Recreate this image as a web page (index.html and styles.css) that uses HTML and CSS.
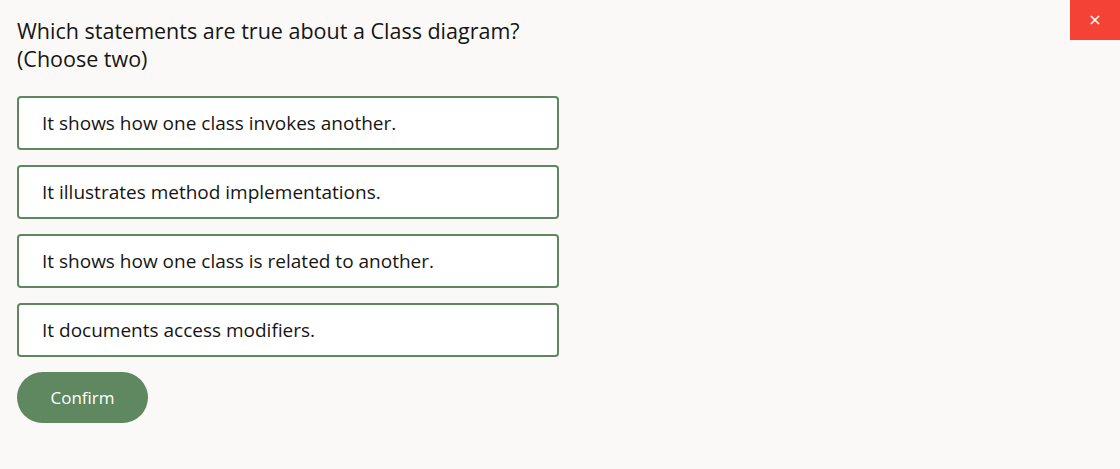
FILE: index.html
```html
<!DOCTYPE html>
<html>
<head>
<meta charset="utf-8">
<link rel="stylesheet" href="styles.css">
</head>
<body>
<button class="close" aria-label="Close">×</button>
<main class="quiz">
  <h1 class="question">Which statements are true about a Class diagram?<br>(Choose two)</h1>
  <div class="options">
    <div class="option">It shows how one class invokes another.</div>
    <div class="option">It illustrates method implementations.</div>
    <div class="option">It shows how one class is related to another.</div>
    <div class="option">It documents access modifiers.</div>
  </div>
  <button class="confirm">Confirm</button>
</main>
</body>
</html>
```

FILE: styles.css
```css
html, body {
  margin: 0;
  padding: 0;
  background: #faf9f8;
  height: 100%;
}
body {
  font-family: "Open Sans", "Noto Sans", sans-serif;
  color: #161513;
}
.close {
  position: absolute;
  top: 0;
  right: 0;
  width: 50px;
  height: 40px;
  border: none;
  background: #f44336;
  color: #fff;
  font-size: 16px;
  line-height: 40px;
  padding: 0;
  font-family: "DejaVu Sans", sans-serif;
}
.quiz {
  padding: 17px 17px 0 17px;
  width: 542px;
}
.question {
  margin: 0;
  font-size: 21.5px;
  font-weight: 400;
  line-height: 28px;
}
.options {
  display: flex;
  flex-direction: column;
  gap: 15px;
  margin-top: 23px;
}
.option {
  height: 54px;
  box-sizing: border-box;
  border: 2px solid #5d875f;
  border-radius: 4px;
  background: #fff;
  display: flex;
  align-items: center;
  padding-left: 23px;
  font-size: 19px;
}
.confirm {
  margin-top: 15px;
  width: 131px;
  height: 51px;
  border: none;
  border-radius: 26px;
  background: #5f8760;
  color: #fff;
  font-family: "Open Sans", "Noto Sans", sans-serif;
  font-size: 17px;
  font-weight: 500;
}
```
